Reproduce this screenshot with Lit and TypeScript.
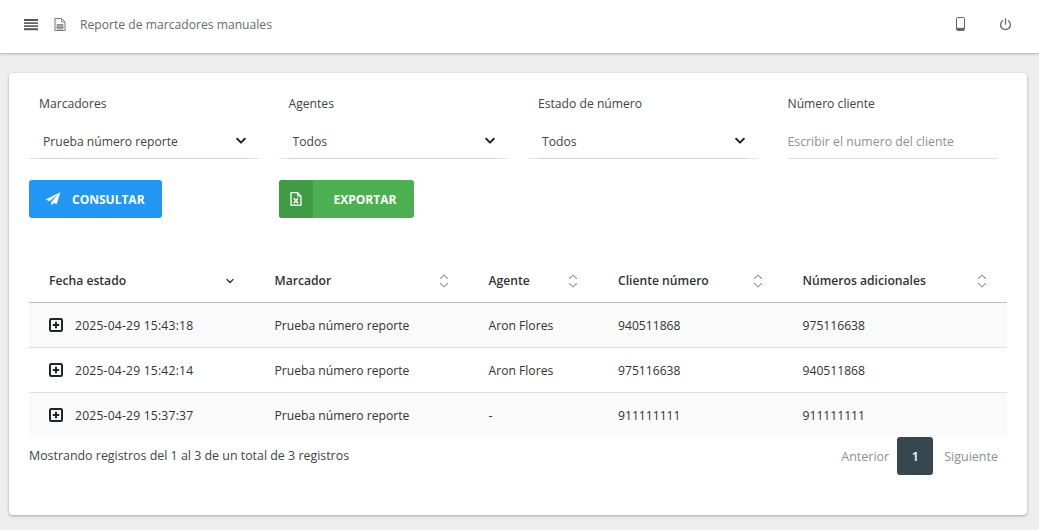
import { LitElement, html, css } from "lit";
import { customElement } from "lit/decorators.js";

const sortIcon = html`<svg class="sort" width="10" height="14" viewBox="0 0 10 14" fill="none" stroke="#999" stroke-width="1.1" stroke-linecap="round" stroke-linejoin="round"><path d="M1.5 4.5 5 1.2l3.5 3.3M1.5 9.5 5 12.8l3.5-3.3"/></svg>`;
const sortDown = html`<svg class="sort" width="10" height="8" viewBox="0 0 10 8" fill="none" stroke="#333" stroke-width="1.4" stroke-linecap="round" stroke-linejoin="round"><path d="M2 2.5 5 5.5 8 2.5"/></svg>`;
const chevron = html`<svg class="chev" width="10" height="8" viewBox="0 0 10 8" fill="none" stroke="#212529" stroke-width="2" stroke-linecap="round" stroke-linejoin="round"><path d="M1.2 1.8 5 5.6l3.8-3.8"/></svg>`;
const plus = html`<svg class="plus" width="14" height="14" viewBox="0 0 14 14"><rect x="1" y="1" width="12" height="12" rx="1.2" fill="none" stroke="#212529" stroke-width="2"/><path d="M7 3.8v6.4M3.8 7h6.4" stroke="#212529" stroke-width="2"/></svg>`;

const rows = [
  ["2025-04-29 15:43:18", "Prueba número reporte", "Aron Flores", "940511868", "975116638"],
  ["2025-04-29 15:42:14", "Prueba número reporte", "Aron Flores", "975116638", "940511868"],
  ["2025-04-29 15:37:37", "Prueba número reporte", "-", "911111111", "911111111"],
];

@customElement("app-root")
export class AppRoot extends LitElement {
  static styles = css`
    :host { display: block; height: 530px; background: #eeeeee; font-family: "Open Sans", "Noto Sans", sans-serif; font-size: 12.15px; color: #333; overflow: hidden; }
    * { box-sizing: border-box; }
    .top { height: 54px; background: #fff; border-bottom: 1px solid #c4c4c4; box-shadow: 0 1px 2px rgba(0,0,0,.12); display: flex; align-items: center; padding: 0 27px 5px 24px; }
    .top .title { margin-left: 14px; color: #6a6a6a; }
    .top .doc { margin-left: 15px; }
    .top .spacer { flex: 1; }
    .top .power { margin-left: 34px; }
    .card { margin: 19px 12px 0 9px; height: 442px; background: #fff; border-radius: 4px; box-shadow: 0 1px 3px rgba(0,0,0,.3); padding: 21px 20px 0; }
    .filters { display: grid; grid-template-columns: repeat(4, 1fr); column-gap: 20px; margin: 0; }
    .f label { display: block; padding-left: 10px; height: 20px; line-height: 20px; color: #444; }
    .f .ctl { margin-top: 9px; height: 36px; display: grid; align-items: center; border-bottom: 1px solid #e6e6e6; position: relative; }
    .f .ctl::after { content: ""; position: absolute; left: 10px; right: 10px; bottom: -1px; height: 1px; background: #d4d4d4; }
    .f select { grid-area: 1/1; appearance: none; border: 0; background: transparent; font: inherit; color: #444; padding: 2px 14px 0; height: 34px; outline: 0; }
    .f .chev { grid-area: 1/1; justify-self: end; margin-right: 13px; }
    .f.num { padding-right: 9px; }
    .f.num label { padding-left: 10px; }
    .f.num .ctl { margin-left: 10px; border-bottom-color: #dedede; }
    .f.num .ctl::after { display: none; }
    .f input { border: 0; outline: 0; font: inherit; font-size: 12.3px; width: 100%; color: #444; padding: 2px 0 0; height: 34px; }
    .f input::placeholder { color: #909090; opacity: 1; }
    .btns { display: grid; grid-template-columns: repeat(4, 1fr); column-gap: 20px; margin-top: 21px; }
    .btn { display: flex; align-items: center; height: 38px; border-radius: 3px; color: #fff; font-weight: 700; font-size: 12px; }
    .blue { background: #2196f3; width: 133px; padding-left: 16px; }
    .blue span { margin-left: 11px; }
    .green { background: #4caf50; width: 135px; }
    .green .ic { width: 34px; height: 100%; background: #3f9b44; border-radius: 3px 0 0 3px; display: flex; align-items: center; justify-content: center; }
    .green span { margin-left: 21px; }
    table { width: 978px; border-collapse: collapse; table-layout: fixed; margin-top: 40px; color: #333; }
    th { height: 44px; padding: 0 20px; text-align: left; font-weight: 600; color: #333; border-bottom: 1px solid #bdbdbd; }
    th .h { display: flex; align-items: center; justify-content: space-between; padding-top: 2px; }
    td { height: 45px; padding: 2px 20px 0; border-bottom: 1px solid #dedede; }
    tr:last-child td { border-bottom: 0; height: 45px; }
    tbody tr:nth-child(odd) { background: #fafafa; }
    .c1 { width: 225.5px; } .c2 { width: 214px; } .c3 { width: 129.5px; } .c4 { width: 184.5px; } .c5 { width: 224.5px; }
    .first { display: flex; align-items: center; gap: 12px; }
    .plus { margin-top: -2px; }
    .date { letter-spacing: .2px; }
    .foot { display: flex; justify-content: space-between; width: 978px; }
    .info { padding-top: 10px; color: #444; font-size: 12.42px; }
    .pager { display: flex; align-items: center; color: #8f8f8f; padding-right: 9px; font-size: 12.5px; }
    .pager .cur { width: 36px; height: 38px; margin: 0 11px 0 8px; background: #37474f; border-radius: 3px; color: #fff; font-weight: 600; display: flex; align-items: center; justify-content: center; }
  `;

  render() {
    return html`
      <div class="top">
        <svg width="15" height="13" viewBox="0 0 15 13" fill="#555"><rect y="1" width="14" height="2"/><rect y="4.3" width="14" height="1.6"/><rect y="7.3" width="14" height="1.6"/><rect y="10.2" width="14" height="2"/></svg>
        <svg class="doc" width="12" height="13" viewBox="0 0 12 13" fill="none" stroke="#777"><path d="M1 .5h6.5L11 4v8.5H1z" stroke-width="1"/><path d="M7.5.5V4H11" stroke-width=".8"/><path d="M3 6.5h6v4.5H3zM3 8h6M3 9.5h6M5 6.5V11M7 6.5V11" stroke-width=".8"/></svg>
        <span class="title">Reporte de marcadores manuales</span>
        <span class="spacer"></span>
        <svg width="9" height="14" viewBox="0 0 9 14" fill="none"><rect x=".5" y=".5" width="8" height="13" rx="1.2" stroke="#666" stroke-width="1"/><rect x="1" y="10.8" width="7" height="2.4" fill="#666"/></svg>
        <svg class="power" width="13" height="13" viewBox="0 0 13 13" fill="none" stroke="#666" stroke-width="1.3" stroke-linecap="round"><path d="M6.5 1v5.2M3.6 2.8a4.9 4.9 0 1 0 5.8 0"/></svg>
      </div>
      <div class="card">
        <div class="filters">
          ${[["Marcadores", "Prueba número reporte"], ["Agentes", "Todos"], ["Estado de número", "Todos"]].map(([l, v]) => html`
            <div class="f"><label>${l}</label><div class="ctl"><select><option>${v}</option></select>${chevron}</div></div>`)}
          <div class="f num"><label>Número cliente</label><div class="ctl"><input placeholder="Escribir el numero del cliente" /></div></div>
        </div>
        <div class="btns">
          <div class="btn blue">
            <svg width="16" height="14" viewBox="0 0 16 14" fill="#fff"><path d="M15.5.2 .6 7.6l3.8 1.6L13 2.6 6.3 10v3.6l2.3-2.6 3 1.3z"/></svg>
            <span>CONSULTAR</span>
          </div>
          <div class="btn green">
            <div class="ic"><svg width="12" height="14" viewBox="0 0 12 14" fill="none" stroke="#fff"><path d="M1 .7h6.5L11 4.2v9H1z" stroke-width="1.3"/><path d="M7.5.7v3.5H11" stroke-width="1"/><path d="M3.8 6.2 8 11.2M8 6.2 3.8 11.2" stroke-width="1.5"/></svg></div>
            <span>EXPORTAR</span>
          </div>
        </div>
        <table>
          <thead><tr>
            <th class="c1"><div class="h">Fecha estado ${sortDown}</div></th>
            <th class="c2"><div class="h">Marcador ${sortIcon}</div></th>
            <th class="c3"><div class="h">Agente ${sortIcon}</div></th>
            <th class="c4"><div class="h">Cliente número ${sortIcon}</div></th>
            <th class="c5"><div class="h">Números adicionales ${sortIcon}</div></th>
          </tr></thead>
          <tbody>
            ${rows.map((r) => html`<tr>
              <td><div class="first">${plus}<span class="date">${r[0]}</span></div></td>
              <td>${r[1]}</td><td>${r[2]}</td><td>${r[3]}</td><td>${r[4]}</td>
            </tr>`)}
          </tbody>
        </table>
        <div class="foot">
          <div class="info">Mostrando registros del 1 al 3 de un total de 3 registros</div>
          <div class="pager"><span>Anterior</span><span class="cur">1</span><span>Siguiente</span></div>
        </div>
      </div>
    `;
  }
}
